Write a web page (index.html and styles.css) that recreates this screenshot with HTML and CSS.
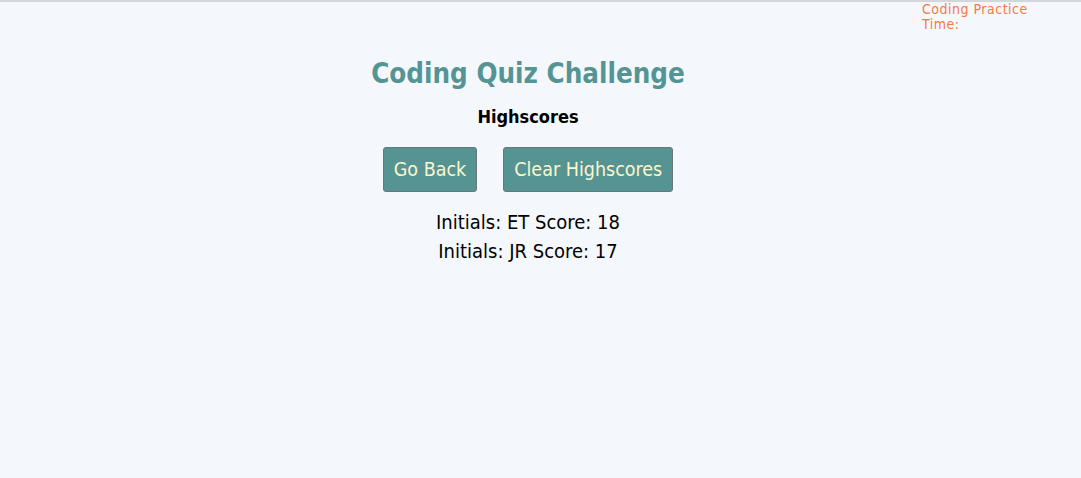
FILE: index.html
```html
<!DOCTYPE html>
<html>
<head>
<meta charset="utf-8">
<link rel="stylesheet" href="styles.css">
</head>
<body>
<header class="topbar">
  <div class="timer">Coding Practice<br>Time: <span class="time"></span></div>
</header>
<main class="content">
  <h1 class="title">Coding Quiz Challenge</h1>
  <h2 class="subtitle">Highscores</h2>
  <div class="actions">
    <button class="btn">Go Back</button>
    <button class="btn">Clear Highscores</button>
  </div>
  <ul class="scores">
    <li>Initials: ET Score: 18</li>
    <li>Initials: JR Score: 17</li>
  </ul>
</main>
</body>
</html>
```
FILE: styles.css
```css
html, body {
  margin: 0;
  padding: 0;
}
body {
  background: #f4f8fc;
  border-top: 2px solid #d4d6d9;
  font-family: "DejaVu Sans Condensed", "DejaVu Sans", sans-serif;
  height: 476px;
}
.topbar {
  display: flex;
  justify-content: flex-end;
}
.timer {
  width: 159px;
  color: #f47a45;
  font-size: 14px;
  line-height: 15px;
  letter-spacing: 0.5px;
}
.content {
  display: flex;
  flex-direction: column;
  align-items: center;
  padding-right: 25px;
}
.title {
  margin: 23px 0 0;
  font-size: 27.5px;
  line-height: 36px;
  color: #559494;
  font-weight: bold;
}
.subtitle {
  margin: 14px 0 0;
  font-size: 18px;
  line-height: 24px;
  color: #000;
  font-weight: bold;
}
.actions {
  display: flex;
  gap: 26px;
  margin-top: 18px;
}
.btn {
  background: #569393;
  color: #fbf7cd;
  font-family: inherit;
  font-size: 19.5px;
  height: 45px;
  padding: 0 10px;
  border: 1px solid #6b7776;
  border-radius: 3px;
}
.scores {
  list-style: none;
  margin: 16px 0 0;
  padding: 0;
  text-align: center;
  font-size: 20px;
  line-height: 29px;
  color: #000;
}
```
